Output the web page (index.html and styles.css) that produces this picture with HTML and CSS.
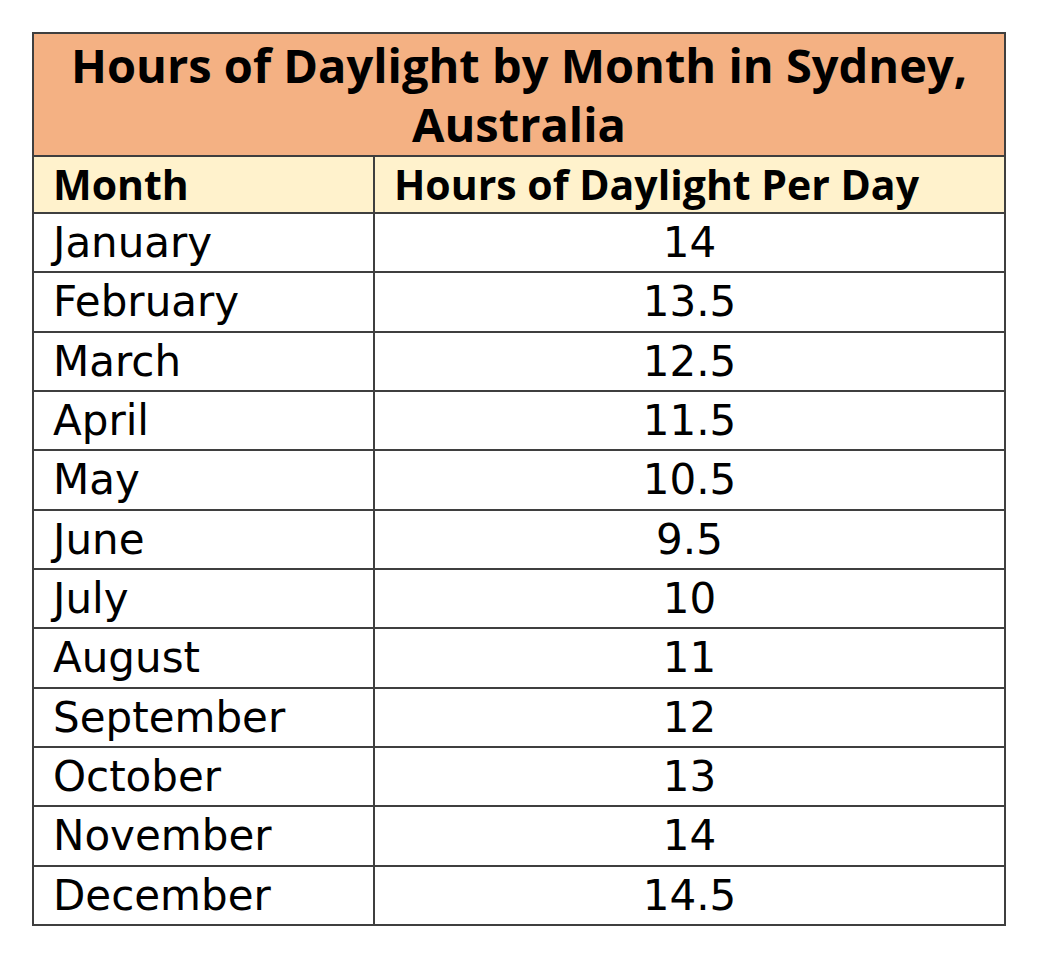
FILE: index.html
```html
<!DOCTYPE html>
<html lang="en">
<head>
<meta charset="utf-8">
<title>Hours of Daylight by Month in Sydney, Australia</title>
<link rel="stylesheet" href="styles.css">
</head>
<body>
<table class="daylight">
  <colgroup>
    <col class="col-month">
    <col class="col-hours">
  </colgroup>
  <thead>
    <tr class="title-row">
      <th class="title" colspan="2">Hours of Daylight by Month in Sydney,<br>Australia</th>
    </tr>
    <tr class="head-row">
      <th class="head">Month</th>
      <th class="head">Hours of Daylight Per Day</th>
    </tr>
  </thead>
  <tbody>
    <tr><td class="month">January</td><td class="hours">14</td></tr>
    <tr><td class="month">February</td><td class="hours">13.5</td></tr>
    <tr><td class="month">March</td><td class="hours">12.5</td></tr>
    <tr><td class="month">April</td><td class="hours">11.5</td></tr>
    <tr><td class="month">May</td><td class="hours">10.5</td></tr>
    <tr><td class="month">June</td><td class="hours">9.5</td></tr>
    <tr><td class="month">July</td><td class="hours">10</td></tr>
    <tr><td class="month">August</td><td class="hours">11</td></tr>
    <tr><td class="month">September</td><td class="hours">12</td></tr>
    <tr><td class="month">October</td><td class="hours">13</td></tr>
    <tr><td class="month">November</td><td class="hours">14</td></tr>
    <tr><td class="month">December</td><td class="hours">14.5</td></tr>
  </tbody>
</table>
</body>
</html>
```

FILE: styles.css
```css
html, body {
  margin: 0;
  padding: 0;
  background: #ffffff;
}

body {
  padding: 32px 0 0 32px;
  font-family: "DejaVu Sans", "Liberation Sans", sans-serif;
  color: #000000;
}

.daylight {
  border-collapse: collapse;
  width: 974px;
  table-layout: fixed;
}

.col-month {
  width: 341px;
}

.title,
.head,
.month,
.hours {
  border: 2px solid #3f3f3f;
  padding: 0;
}

.title {
  background: #f4b183;
  font-family: "Open Sans", "Liberation Sans", sans-serif;
  font-weight: 700;
  font-size: 47px;
  line-height: 59px;
  height: 121px;
  text-align: center;
  vertical-align: middle;
}

.head {
  background: #fff2cc;
  font-family: "Open Sans", "Liberation Sans", sans-serif;
  font-weight: 700;
  font-size: 41px;
  line-height: 55px;
  height: 55px;
  text-align: left;
  padding-left: 19px;
  vertical-align: middle;
  white-space: nowrap;
}

.month,
.hours {
  font-size: 42px;
  line-height: 57px;
  height: 57.33px;
  vertical-align: middle;
}

.month {
  text-align: left;
  padding-left: 19px;
}

.hours {
  text-align: center;
}
```
